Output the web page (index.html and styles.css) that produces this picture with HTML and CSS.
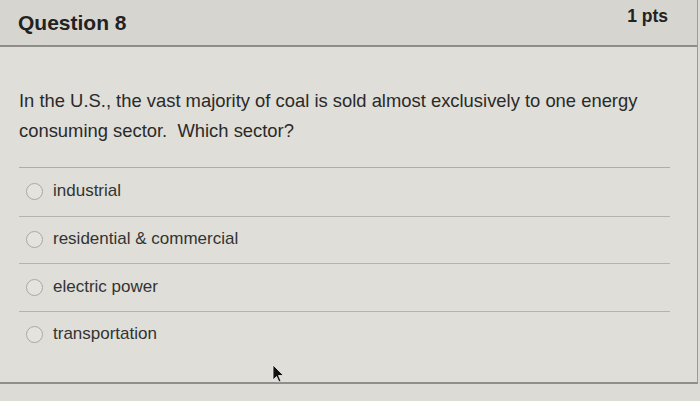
FILE: index.html
```html
<!DOCTYPE html>
<html>
<head>
<meta charset="utf-8">
<link rel="stylesheet" href="styles.css">
</head>
<body>
<div class="quiz">
  <div class="header">
    <div class="title">Question 8</div>
    <div class="pts">1 pts</div>
  </div>
  <div class="body">
    <div class="question">In the U.S., the vast majority of coal is sold almost exclusively to one energy consuming sector.&nbsp; Which sector?</div>
    <div class="answers">
      <div class="answer"><span class="radio"></span><span class="label">industrial</span></div>
      <div class="answer"><span class="radio"></span><span class="label">residential &amp; commercial</span></div>
      <div class="answer"><span class="radio"></span><span class="label">electric power</span></div>
      <div class="answer"><span class="radio"></span><span class="label">transportation</span></div>
    </div>
  </div>
  <svg class="cursor" width="14" height="20" viewBox="0 0 14 20"><path d="M1 1 L1 16 L4.5 12.5 L7 18 L9 17 L6.5 11.5 L11.5 11.5 Z" fill="#111" stroke="#eee" stroke-width="0.8"/></svg>
</div>
</body>
</html>
```
FILE: styles.css
```css
html, body {
  margin: 0;
  padding: 0;
}
body {
  background: #dcdbd5;
  font-family: "Liberation Sans", Arial, sans-serif;
  color: #2b2b2b;
  width: 700px;
  height: 401px;
  overflow: hidden;
}
.quiz {
  position: relative;
  width: 697px;
  height: 382px;
  border-right: 1px solid #9c9b96;
  border-bottom: 2px solid #8f8e89;
  background: #dfded8;
}
.header {
  height: 45px;
  background: #d6d5cf;
  border-bottom: 2px solid #8e8d88;
  display: flex;
  justify-content: space-between;
  padding: 0 29px 0 18px;
}
.title {
  font-weight: 700;
  font-size: 21px;
  padding-top: 11px;
  color: #222;
}
.pts {
  font-weight: 700;
  font-size: 17.5px;
  padding-top: 6px;
  color: #222;
}
.body {
  padding: 39px 27px 0 19px;
}
.question {
  font-size: 18.4px;
  line-height: 30px;
  width: 651px;
  padding-bottom: 21px;
  border-bottom: 1px solid #aeada7;
  color: #2a2a2a;
}
.answers {
  display: flex;
  flex-direction: column;
}
.answer {
  height: 46.5px;
  border-bottom: 1px solid #b4b3ad;
  display: flex;
  align-items: center;
  padding-left: 7px;
}
.answer:first-child {
  height: 47.5px;
}
.answer:last-child {
  border-bottom: none;
}
.radio {
  width: 15px;
  height: 15px;
  border-radius: 50%;
  border: 1.5px solid #a9a8a3;
  background: #e4e3de;
  margin-right: 10px;
  flex: none;
}
.label {
  font-size: 17px;
  color: #333;
  padding-bottom: 1px;
}
.cursor {
  position: absolute;
  left: 272px;
  top: 364px;
}
```
